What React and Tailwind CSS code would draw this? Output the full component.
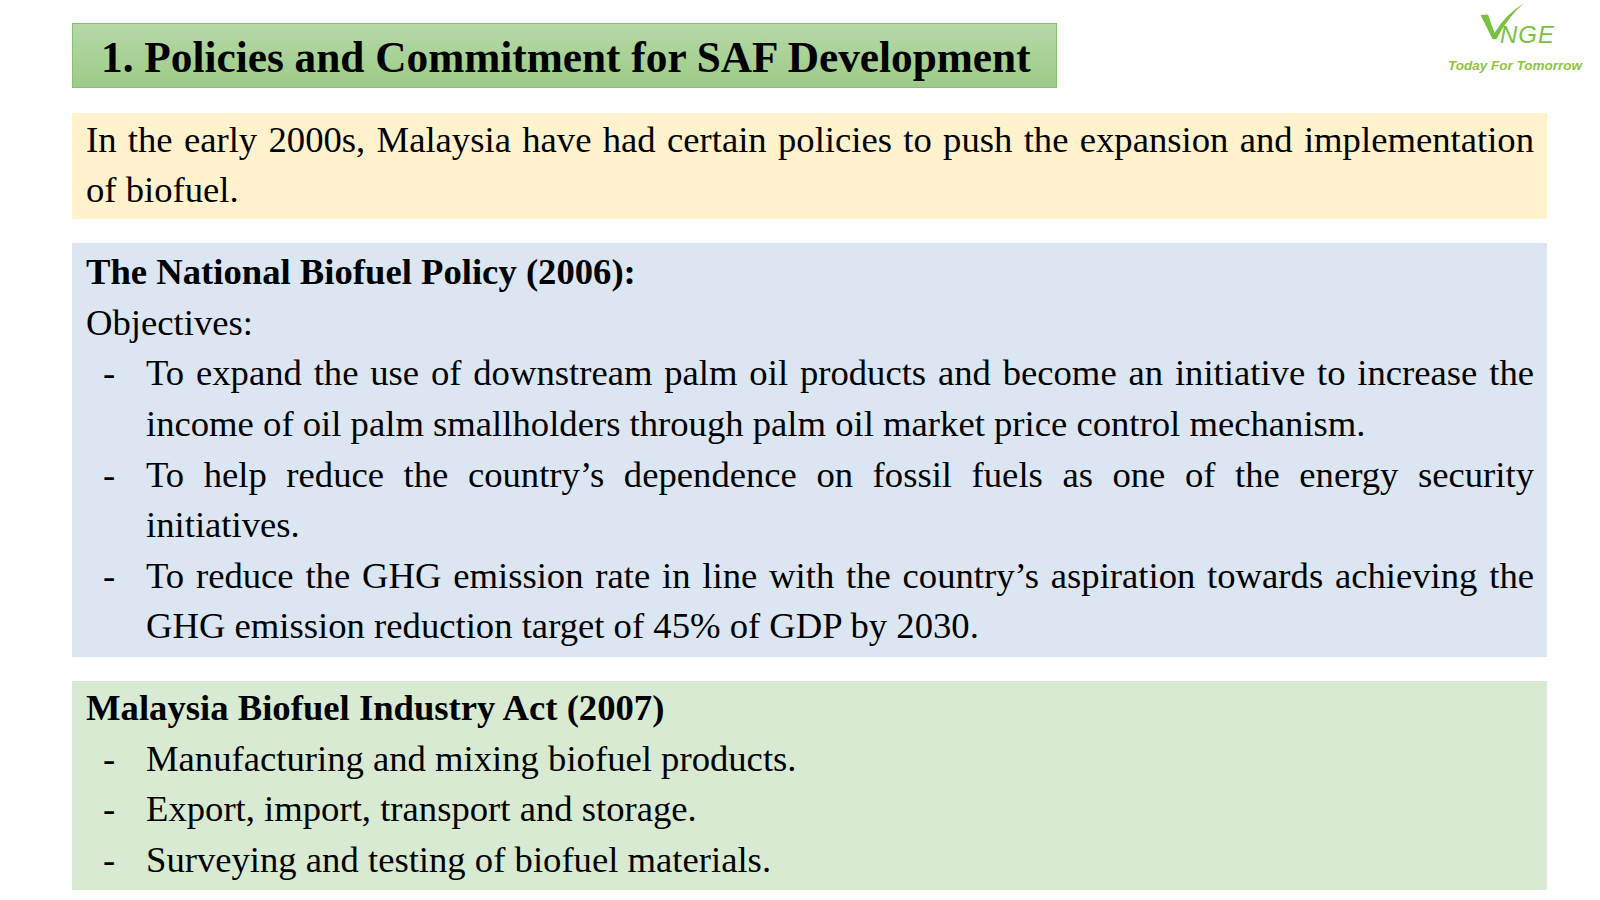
const serif = { fontFamily: '"Liberation Serif", "Times New Roman", serif' };
const sans = { fontFamily: '"Liberation Sans", Arial, sans-serif' };

const Dash = ({ children }) => (
  <div className="flex pl-[17px]">
    <span className="w-[43px] shrink-0">-</span>
    <p className="flex-1 text-justify">{children}</p>
  </div>
);

const Logo = () => (
  <div className="relative w-[136px] h-[72px] -mt-[20px] shrink-0">
    <svg className="absolute left-[4px] top-0" width="80" height="42" viewBox="0 0 80 42">
      <path d="M30.5 12 L38 11.5 L44.5 30 Q55 12 74 0 Q58 14 46.5 36 L42.5 36 Z" fill="#7ac143" />
    </svg>
    <span className="absolute left-[54px] top-[20px] text-[24px] leading-none italic tracking-[1px] text-[#7ac143]" style={sans}>
      NGE
    </span>
    <span className="absolute left-[2px] top-[56px] text-[13.5px] leading-none italic font-bold text-[#8cc63f] whitespace-nowrap" style={sans}>
      Today For Tomorrow
    </span>
  </div>
);

export default function App() {
  return (
    <div className="w-[1600px] h-[900px] bg-white overflow-hidden pt-[23px] pl-[72px] pr-[18px] text-black" style={serif}>
      {/* header */}
      <div className="flex items-start justify-between">
        <div className="w-[985px] h-[65px] flex items-center pl-[28px] pt-[4px] border border-[#88c070] bg-gradient-to-b from-[#b6d8a8] to-[#9ccb87]">
          <h1 className="text-[43.3px] leading-[1.15] font-bold whitespace-nowrap">
            1. Policies and Commitment for SAF Development
          </h1>
        </div>
        <Logo />
      </div>

      <div className="w-[1475px] text-[36.67px] leading-[50.6px]">
        {/* intro */}
        <div className="mt-[25px] bg-[#fff2cc] pl-[14px] pr-[13px] pt-[1.5px] pb-[3.5px]">
          <p className="text-justify">
            In the early 2000s, Malaysia have had certain policies to push the expansion and implementation of biofuel.
          </p>
        </div>

        {/* national biofuel policy */}
        <div className="mt-[24px] bg-[#dce6f2] pl-[14px] pr-[13px] pt-[4px] pb-[5px]">
          <p className="font-bold">The National Biofuel Policy (2006):</p>
          <p>Objectives:</p>
          <Dash>
            To expand the use of downstream palm oil products and become an initiative to increase the income of oil palm smallholders through palm oil market price control mechanism.
          </Dash>
          <Dash>
            To help reduce the country’s dependence on fossil fuels as one of the energy security initiatives.
          </Dash>
          <Dash>
            To reduce the GHG emission rate in line with the country’s aspiration towards achieving the GHG emission reduction target of 45% of GDP by 2030.
          </Dash>
        </div>

        {/* industry act */}
        <div className="mt-[24px] bg-[#d9ead3] pl-[14px] pr-[13px] pt-[2px] pb-[4.5px]">
          <p className="font-bold">Malaysia Biofuel Industry Act (2007)</p>
          <Dash>Manufacturing and mixing biofuel products.</Dash>
          <Dash>Export, import, transport and storage.</Dash>
          <Dash>Surveying and testing of biofuel materials.</Dash>
        </div>
      </div>
    </div>
  );
}
